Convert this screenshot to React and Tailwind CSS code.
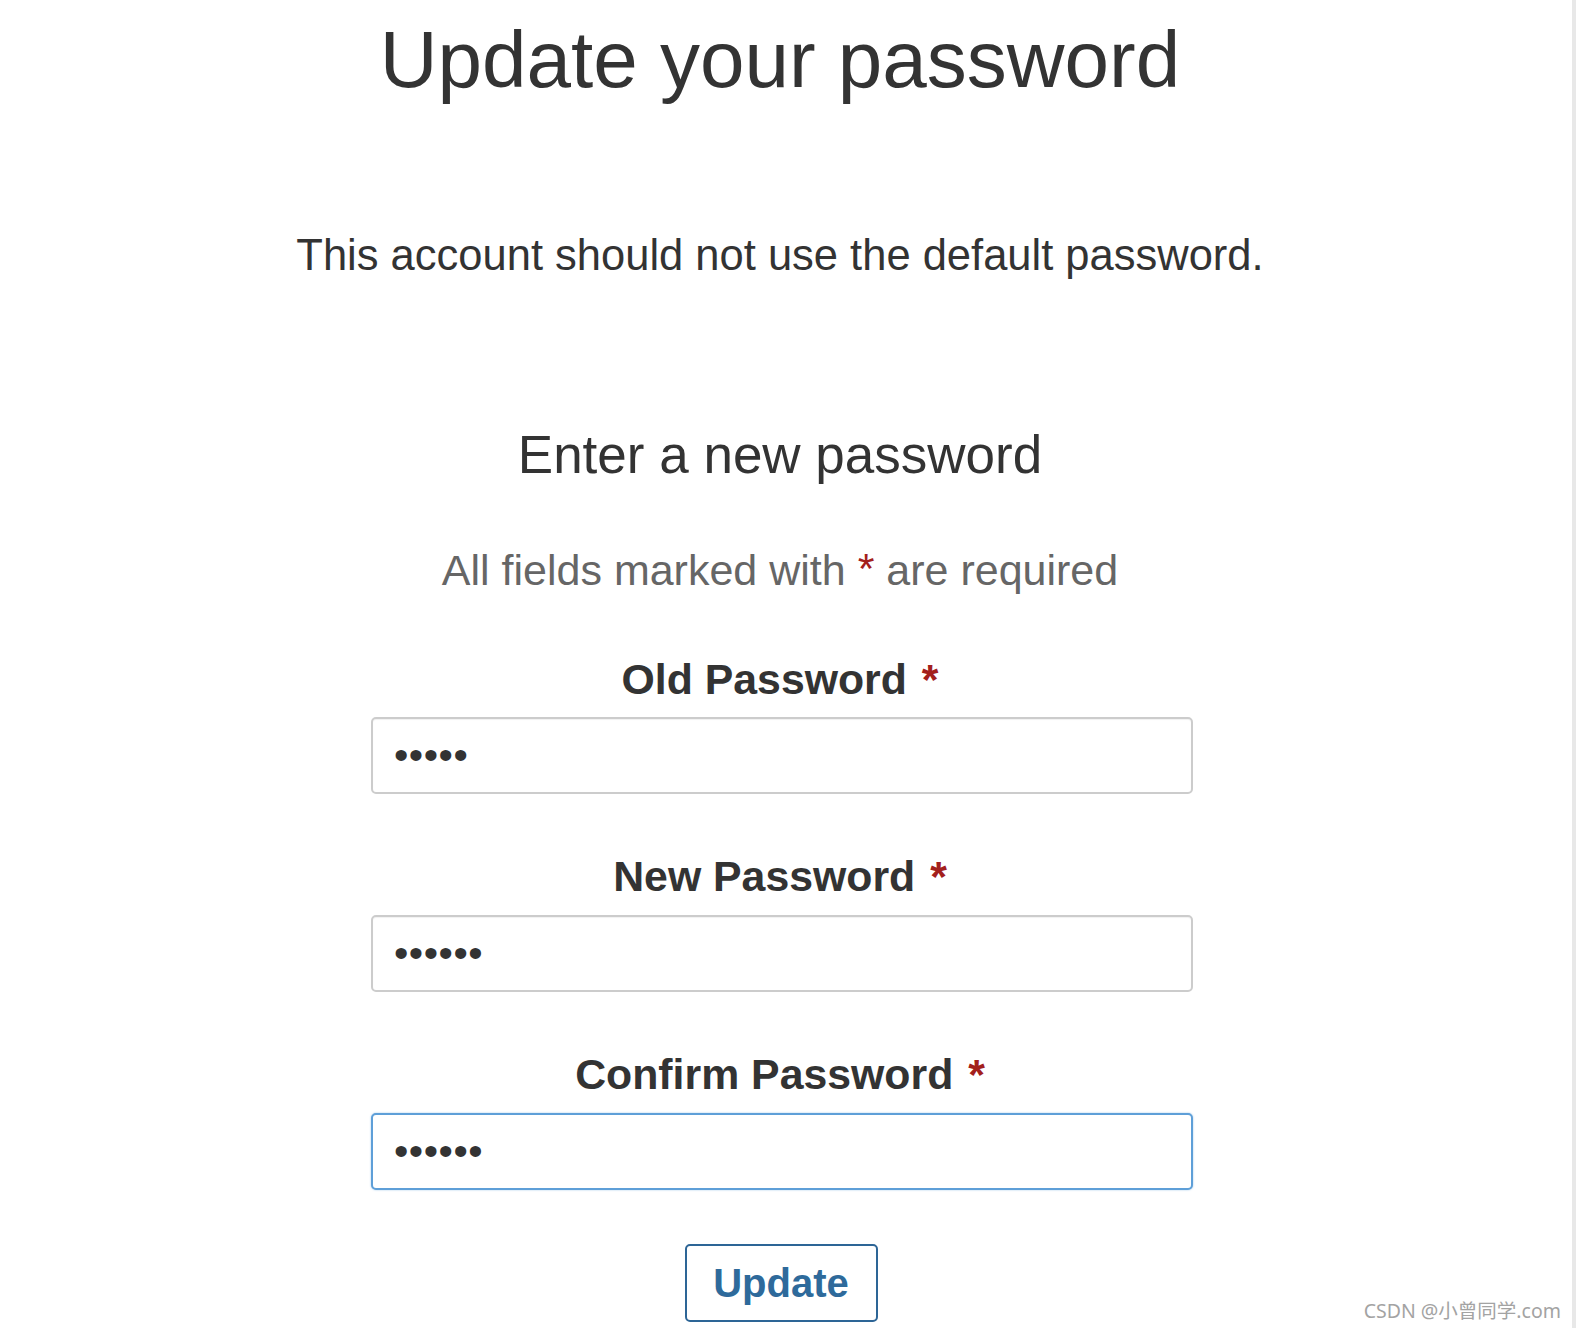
import { useState } from 'react'

function Required({ className = '' }) {
  return <span className={`text-[#a3201c] ${className}`}>*</span>
}

function PasswordField({ label, value, onChange, focused, className }) {
  return (
    <div className={`flex flex-col items-center ${className}`}>
      <label className="text-[42.8px] leading-none font-bold text-[#333]">
        {label} <Required className="ml-[3px]" />
      </label>
      <input
        type="password"
        value={value}
        onChange={(e) => onChange(e.target.value)}
        className={`mt-[17px] ml-[4px] w-[822px] h-[77px] rounded-[5px] bg-white pl-[21px] pr-[21px] text-[41px] tracking-[0.5px] text-[#333] outline-none border-2 ${
          focused
            ? 'border-[#5e9fd8] shadow-[0_0_2px_rgba(94,159,216,0.6)]'
            : 'border-[#cccccc] shadow-[inset_0_1px_1px_rgba(0,0,0,0.06)]'
        }`}
      />
    </div>
  )
}

export default function App() {
  const [oldPw, setOldPw] = useState('12345')
  const [newPw, setNewPw] = useState('123456')
  const [confirmPw, setConfirmPw] = useState('123456')

  return (
    <div
      className="relative flex h-[1328px] w-[1576px] bg-white overflow-hidden"
      style={{ fontFamily: '"Liberation Sans", Arial, sans-serif' }}
    >
      <main className="w-[1572px] pr-[12px] flex flex-col items-center">
        <h1 className="mt-[20px] text-[80px] leading-none font-normal text-[#333]">
          Update your password
        </h1>
        <p className="mt-[134px] text-[43.5px] leading-none text-[#333]">
          This account should not use the default password.
        </p>

        <h2 className="mt-[150px] text-[53px] leading-none font-normal text-[#333]">
          Enter a new password
        </h2>
        <p className="mt-[68px] text-[43px] leading-none text-[#666]">
          All fields marked with <Required className="relative -top-[2px]" /> are required
        </p>

        <form onSubmit={(e) => e.preventDefault()} className="flex flex-col items-center">
          <PasswordField className="mt-[66px]" label="Old Password" value={oldPw} onChange={setOldPw} />
          <PasswordField className="mt-[61px]" label="New Password" value={newPw} onChange={setNewPw} />
          <PasswordField
            className="mt-[61px]"
            label="Confirm Password"
            value={confirmPw}
            onChange={setConfirmPw}
            focused
          />
          <button
            type="submit"
            className="mt-[54px] ml-[2px] w-[193px] h-[78px] rounded-[5px] border-2 border-[#2d6596] bg-white text-[40px] font-bold text-[#2e6a9b]"
          >
            Update
          </button>
        </form>
      </main>
      <div className="w-[4px] h-full bg-[#e8e8e8]" />

      <span
        className="absolute right-[15px] bottom-[3px] text-[19.5px] text-[#a3a3a3]"
        style={{ fontFamily: '"Noto Sans", "Noto Sans CJK SC", sans-serif' }}
      >
        CSDN @小曾同学.com
      </span>
    </div>
  )
}
